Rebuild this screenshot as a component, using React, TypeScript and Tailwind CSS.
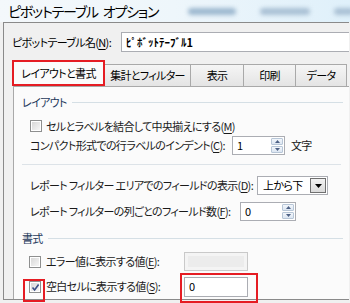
const Checkbox = ({ checked = false }: { checked?: boolean }) => (
  <div className="relative h-[12px] w-[12px] shrink-0 border border-[#8e8f8f] bg-white p-px">
    <div className="h-full w-full bg-gradient-to-br from-[#d8d8d8] to-[#f6f6f6]" />
    {checked && (
      <svg className="absolute left-[1px] top-[1px]" width="9" height="9" viewBox="0 0 9 9">
        <path d="M1.5 4.5 L3.6 7 L7.6 1.5" fill="none" stroke="#3c4f86" strokeWidth="1.6" />
      </svg>
    )}
  </div>
);

const Spinner = ({ value, width }: { value: string; width: string }) => (
  <div className={`flex h-[19px] ${width} shrink-0 items-stretch border border-[#abadb3] bg-white`}>
    <div className="flex flex-1 items-center pl-[4px] text-[11px] text-black">{value}</div>
    <div className="flex w-[14px] flex-col gap-px p-px">
      <div className="flex flex-1 items-center justify-center rounded-[1px] border border-[#b7c6d7] bg-gradient-to-b from-[#f2f6fb] to-[#dce6f2]">
        <svg width="5" height="3" viewBox="0 0 5 3"><path d="M0 3 L2.5 0 L5 3 Z" fill="#4d6185" /></svg>
      </div>
      <div className="flex flex-1 items-center justify-center rounded-[1px] border border-[#b7c6d7] bg-gradient-to-b from-[#f2f6fb] to-[#dce6f2]">
        <svg width="5" height="3" viewBox="0 0 5 3"><path d="M0 0 L2.5 3 L5 0 Z" fill="#4d6185" /></svg>
      </div>
    </div>
  </div>
);

const Label = ({ text, u, rest, width }: { text: string; u: string; rest: string; width?: string }) => (
  <span className={`shrink-0 whitespace-nowrap ${width ?? ''}`}>
    {text}(<span className="underline underline-offset-2">{u}</span>){rest}
  </span>
);

const SectionHeader = ({ title }: { title: string }) => (
  <div className="flex h-[14px] items-center gap-[5px] pl-[8px] pr-[6px]">
    <span className="whitespace-nowrap text-[#1e395b]">{title}</span>
    <div className="h-px flex-1 bg-[#d5dfe5]" />
  </div>
);

export default function App() {
  const tabs = [
    { name: '集計とフィルター', w: 'w-[86px]' },
    { name: '表示', w: 'w-[53px]' },
    { name: '印刷', w: 'w-[52px]' },
    { name: 'データ', w: 'w-[51px]' },
  ];

  return (
    <div className="flex h-[303px] w-[350px] flex-col overflow-hidden bg-[#f0f0f0] font-['Noto_Sans_CJK_JP',sans-serif] text-[11px] tracking-[-0.65px] text-[#1a1a1a] [font-feature-settings:'palt']">
      {/* Title bar */}
      <div className="flex h-[22px] shrink-0 items-center bg-gradient-to-r from-[#f4f8fb] via-[#eef6fb] to-[#dff0fa] pl-[8px]">
        <div className="flex w-[180px] shrink-0 items-center gap-[5px] whitespace-nowrap text-[14px] leading-none tracking-[-1.2px] text-black">
          <span>ピボットテーブル</span>
          <span>オプション</span>
        </div>
        <div className="flex items-center gap-[24px]">
          <div className="h-[7px] w-[48px] rounded-full bg-[#9db8cf] blur-[2px]" />
          <div className="h-[7px] w-[50px] rounded-full bg-[#a9c0d4] blur-[2px]" />
          <div className="h-[7px] w-[20px] rounded-full bg-[#a9c0d4] blur-[2px]" />
        </div>
      </div>

      {/* Dialog body */}
      <div className="mb-[3px] ml-[3px] mr-[1px] flex flex-1 flex-col border-b border-l border-t border-[#8a8a8a]">
        {/* Name row */}
        <div className="mt-[9px] flex h-[20px] items-center">
          <span className="w-[117px] shrink-0 whitespace-nowrap pl-[8px] text-black">
            ピボットテーブル名(<span className="underline underline-offset-2">N</span>):
          </span>
          <div className="flex h-[20px] flex-1 items-center border-y border-l border-[#abadb3] bg-white pl-[4px] font-bold tracking-normal text-black">
            ﾋﾟﾎﾞｯﾄﾃｰﾌﾞﾙ1
          </div>
        </div>

        {/* Tabs */}
        <div className="mt-[8px] flex h-[26px] items-end pl-[8px]">
          <div className="z-10 flex h-[26px] w-[93px] items-center justify-center whitespace-nowrap border-2 border-[#e51c23] bg-[#fbfbfb] text-black">
            レイアウトと書式
          </div>
          {tabs.map((t) => (
            <div
              key={t.name}
              className={`flex h-[22px] ${t.w} items-center justify-center whitespace-nowrap border-r border-t border-[#a9a9a9] bg-gradient-to-b from-[#f5f5f5] to-[#e4e4e4] text-black`}
            >
              {t.name}
            </div>
          ))}
        </div>

        {/* Panel */}
        <div className="ml-[9px] flex flex-1 flex-col border-l border-t border-[#a9a9a9] bg-[#fbfbfb]">
          <div className="mt-[8px]">
            <SectionHeader title="レイアウト" />
          </div>

          <div className="mt-[10px] flex h-[14px] items-center gap-[4px] pl-[16px]">
            <Checkbox />
            <Label text="セルとラベルを結合して中央揃えにする" u="M" rest="" />
          </div>

          <div className="mt-[3px] flex h-[19px] items-center pl-[16px]">
            <Label text="コンパクト形式での行ラベルのインデント" u="C" rest=":" width="w-[202px]" />
            <Spinner value="1" width="w-[53px]" />
            <span className="ml-[6px] whitespace-nowrap">文字</span>
          </div>

          <div className="mx-[8px] mt-[9px] h-px bg-[#dde3e8]" />

          <div className="mt-[11px] flex h-[19px] items-center pl-[16px]">
            <Label text="レポート フィルター エリアでのフィールドの表示" u="D" rest=":" width="w-[227px]" />
            <div className="flex h-[19px] w-[71px] shrink-0 items-stretch border border-[#abadb3] bg-white">
              <div className="flex flex-1 items-center whitespace-nowrap pl-[5px] text-black">上から下</div>
              <div className="m-px flex w-[16px] items-center justify-center border border-[#707070] bg-gradient-to-b from-[#f2f2f2] to-[#dadada]">
                <svg width="7" height="4" viewBox="0 0 7 4"><path d="M0 0 L3.5 4 L7 0 Z" fill="#000" /></svg>
              </div>
            </div>
          </div>

          <div className="mt-[7px] flex h-[19px] items-center pl-[16px]">
            <Label text="レポート フィルターの列ごとのフィールド数" u="F" rest=":" width="w-[210px]" />
            <Spinner value="0" width="w-[56px]" />
          </div>

          <div className="mt-[10px]">
            <SectionHeader title="書式" />
          </div>

          <div className="mt-[7px] flex h-[19px] items-center pl-[15px]">
            <Checkbox />
            <span className="ml-[5px] flex">
              <Label text="エラー値に表示する値" u="E" rest=":" width="w-[138px]" />
            </span>
            <div className="h-[19px] w-[64px] shrink-0 border border-[#c9c9c9] bg-[#f4f4f4] p-[3px]">
              <div className="h-full w-full bg-[#ececec]" />
            </div>
          </div>

          <div className="mt-[6px] flex h-[19px] items-center pl-[15px]">
            <div className="relative">
              <Checkbox checked />
              <div className="absolute left-[-6px] top-[-2px] h-[23px] w-[22px] border-2 border-[#e51c23]" />
            </div>
            <span className="ml-[5px] flex">
              <Label text="空白セルに表示する値" u="S" rest=":" width="w-[138px]" />
            </span>
            <div className="relative h-[20px] w-[64px] shrink-0">
              <div className="flex h-full w-full items-center border border-[#abadb3] bg-white pl-[4px] text-black">0</div>
              <div className="absolute left-[-4px] top-[-4px] h-[30px] w-[78px] border-2 border-[#e51c23]" />
            </div>
          </div>
        </div>
      </div>
    </div>
  );
}
